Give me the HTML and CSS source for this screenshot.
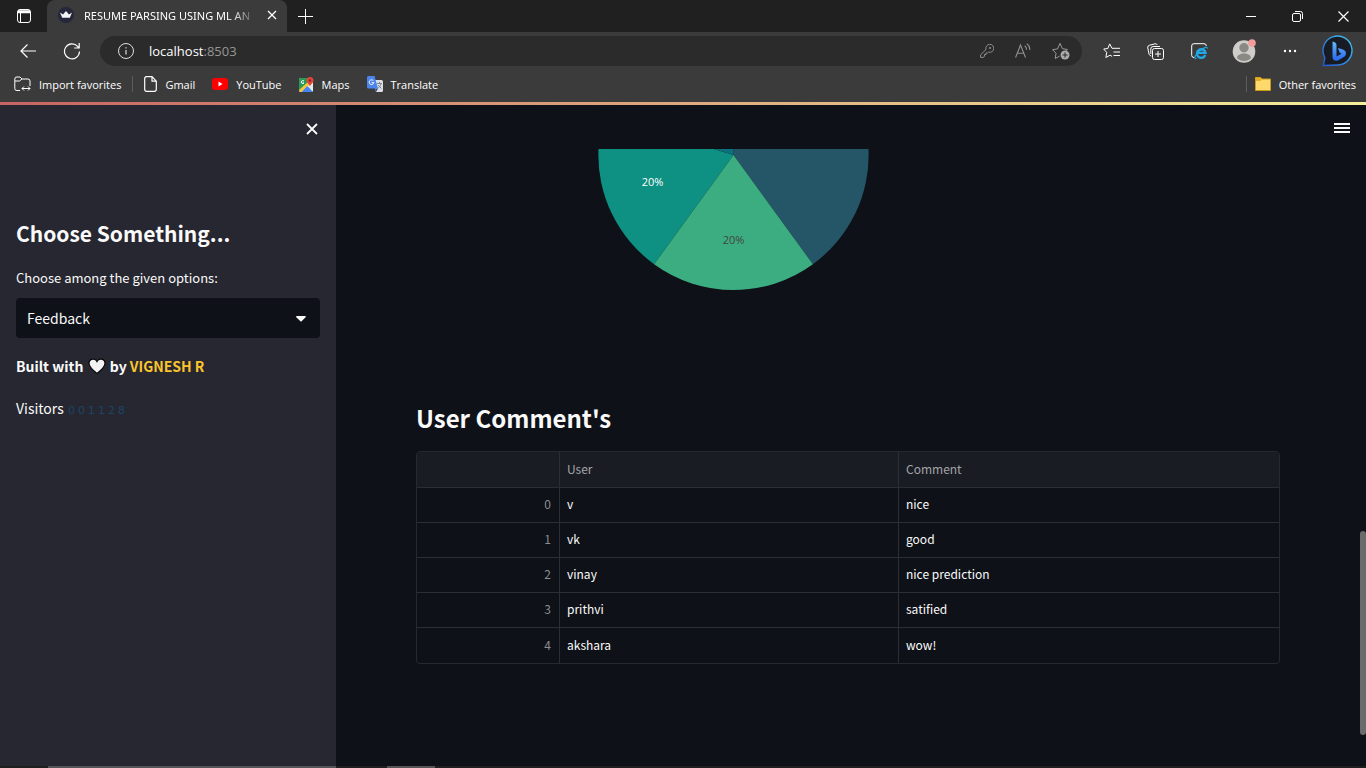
FILE: index.html
```html
<!DOCTYPE html>
<html lang="en">
<head>
<meta charset="utf-8">
<title>Resume parsing using ML and NLP</title>
<link rel="stylesheet" href="styles.css">
</head>
<body>
<div class="window">
  <header class="browser">
    <div class="tabstrip">
      <button class="icon-btn tab-actions" aria-label="Tab actions">
        <svg width="16" height="16" viewBox="0 0 16 16" fill="none" stroke="#fff"><rect x="1.5" y="1.5" width="13" height="13" rx="2.5"/><path d="M2 4.5h12M2 3h12" stroke-width="1.6"/><path d="M4.500 5v9"/></svg>
      </button>
      <div class="tab">
        <svg class="favicon" width="16" height="16" viewBox="0 0 16 16"><circle cx="8" cy="8" r="8" fill="#26273a"/><path d="M2 5.600l3 1.800L8 4l3 3.400 3-1.800-2.200 5.200H4.200z" fill="#f4f4f8"/></svg>
        <span class="tab-title">RESUME PARSING USING ML AN</span>
        <button class="icon-btn" aria-label="Close tab">
          <svg width="10" height="10" viewBox="0 0 10 10" stroke="#fff" stroke-width="1.300"><path d="M1 1l8 8M9 1L1 9"/></svg>
        </button>
      </div>
      <button class="icon-btn new-tab" aria-label="New tab">
        <svg width="15" height="15" viewBox="0 0 15 15" stroke="#fff"><path d="M7.500 0v15M0 7.500h15"/></svg>
      </button>
      <div class="window-controls">
        <button class="icon-btn" aria-label="Minimize"><svg width="10" height="10" viewBox="0 0 10 10" stroke="#fff"><path d="M0 5.500h10"/></svg></button>
        <button class="icon-btn" aria-label="Restore"><svg width="11" height="11" viewBox="0 0 11 11" fill="none" stroke="#fff"><rect x=".5" y="2.500" width="8" height="8" rx="1.500"/><path d="M3 .5h5.500a2 2 0 0 1 2 2V8"/></svg></button>
        <button class="icon-btn" aria-label="Close"><svg width="11" height="11" viewBox="0 0 11 11" stroke="#fff" stroke-width="1.200"><path d="M.5.5l10 10M10.500.5l-10 10"/></svg></button>
      </div>
    </div>

    <div class="toolbar">
      <button class="icon-btn back" aria-label="Back"><svg width="16" height="14" viewBox="0 0 16 14" fill="none" stroke="#fff" stroke-width="1.200"><path d="M16 7H1M7.500.5L1 7l6.500 6.500"/></svg></button>
      <button class="icon-btn reload" aria-label="Refresh"><svg width="18" height="18" viewBox="0 0 18 18" fill="none" stroke="#fff" stroke-width="1.200"><path d="M16.500 9.500A7.500 7.500 0 1 1 14.600 4.300L16 6M16.200 1v5h-5"/></svg></button>
      <div class="address">
        <svg width="16" height="16" viewBox="0 0 16 16" fill="none" stroke="#ddd"><circle cx="8" cy="8" r="7.500"/><path d="M8 7v4.500M8 4.200v1.400" stroke-width="1.200"/></svg>
        <span class="url">localhost<span class="port">:8503</span></span>
        <svg width="14" height="14" viewBox="0 0 14 14" fill="none" stroke="#909090"><path d="M6 5.500a4 4 0 1 1 2.500 2.600L7.500 9H6v1.500H4.500V12L3.500 13.400H.6v-2.500z"/><circle cx="10" cy="4" r=".7"/></svg>
        <svg width="16" height="16" viewBox="0 0 16 16" fill="none" stroke="#909090" stroke-width="1.100"><path d="M.6 14.500L5.500 2l5 12.500M2.300 10.200h6.500M9.700 2.700q2 1.400 1.800 4M11.700.6Q15.200 3 14.700 7"/></svg>
        <svg width="18" height="18" viewBox="0 0 18 18" fill="none" stroke="#999"><path d="M7.600 14.200l-4.400 2.300.8-5.200-3.400-3.600 4.900-.8L8 1.400l2.400 5.300 5 .8-1.300 1.300"/><circle cx="13" cy="13" r="4.500" fill="#aaa" stroke="none"/><path d="M13 10.500v5M10.500 13h5" stroke="#2b2b2b"/></svg>
      </div>
      <div class="tools">
        <button class="icon-btn" aria-label="Favorites"><svg width="17" height="16" viewBox="0 0 17 16" fill="none" stroke="#fff"><path d="M9 5.300h8M10.500 9H17M10.500 12.500H17M9 5.300L6.700.9 4.800 5.500.7 6l3 3.400-.8 5.100 4.200-2.300 2 1.200"/></svg></button>
        <button class="icon-btn" aria-label="Collections"><svg width="17" height="17" viewBox="0 0 17 17" fill="none" stroke="#fff"><path d="M4.300 13L3 12.500A3 3 0 0 1 2 11L.8 5A2.200 2.200 0 0 1 2.300 2.300L8 .8a2 2 0 0 1 2.300 1.200"/><rect x="5.500" y="5.500" width="11" height="11" rx="2"/><path d="M11 8v6M8 11h6M3.800 11V6a2.400 2.400 0 0 1 2.400-2.500H13"/></svg></button>
        <button class="icon-btn" aria-label="Internet Explorer mode"><svg width="17" height="17" viewBox="0 0 17 17" fill="none"><path d="M3.500 14.500H3A2.200 2.200 0 0 1 .7 12.500V3A2.200 2.200 0 0 1 3 .7h10A2.200 2.200 0 0 1 15.300 3" stroke="#fff"/><path d="M14.300 12A4.300 4.300 0 1 1 14.500 9.800H7" stroke="#20a9e5" stroke-width="2.300"/><path d="M5.500 15.500c-3 .8-2-3.500 3-7.500s8.500-5 7.500-2.200" stroke="#20a9e5" stroke-width="1.100"/></svg></button>
        <button class="icon-btn wide" aria-label="Profile"><svg width="24" height="24" viewBox="0 0 24 24"><circle cx="12" cy="12.500" r="11.300" fill="#cfcdca"/><circle cx="12" cy="8.800" r="4.700" fill="#8b8986"/><path d="M5 19c0-6 14-6 14 0-3 4-11 4-14 0z" fill="#8b8986"/><circle cx="20" cy="4" r="3.800" fill="#f29c9c"/></svg></button>
        <button class="icon-btn wide" aria-label="Settings and more"><svg width="14" height="4" viewBox="0 0 14 4" fill="#fff"><circle cx="2" cy="2" r="1.200"/><circle cx="7" cy="2" r="1.200"/><circle cx="12" cy="2" r="1.200"/></svg></button>
        <button class="icon-btn bing" aria-label="Bing"><svg width="32" height="32" viewBox="0 0 32 32"><defs><linearGradient id="bing" x1="0" y1="1" x2="1" y2="0"><stop offset="0" stop-color="#2459d8"/><stop offset="1" stop-color="#43c5ef"/></linearGradient><linearGradient id="bing-b" x1="0" y1="0" x2="0" y2="1"><stop offset="0" stop-color="#63b9fb"/><stop offset="1" stop-color="#2864ee"/></linearGradient></defs><path d="M1.500 30.500l1.300-8A14.500 14.500 0 1 1 16 30z" fill="#171b23" stroke="url(#bing)" stroke-width="1.400"/><path d="M10.500 6.500q4 .5 4 3.500v11.500l5-2.700-2-1.300-1.500-4.500q8 1.500 8 5 0 3-3 4.500l-4.500 2.700q-3 1.500-5-.5-1-1-1-3z" fill="url(#bing-b)"/></svg></button>
      </div>
    </div>

    <nav class="bookmarks" aria-label="Favorites bar">
      <a href="#"><svg width="17" height="16" viewBox="0 0 17 16" fill="none" stroke="#fff"><path d="M6 14.500H3A2 2 0 0 1 .8 12.500V3A2 2 0 0 1 3 1h3l2 2h6a2 2 0 0 1 2 2v5M1 5h4.500L8 3M8 12.500h8M10 10.500l-2 2 2 2M14 10.500l2 2-2 2"/></svg>Import favorites</a>
      <span class="divider"></span>
      <a href="#"><svg width="13" height="16" viewBox="0 0 13 16" fill="none" stroke="#fff" stroke-width="1.200"><path d="M2.500.7H8l4.300 4.500v8.300a1.800 1.800 0 0 1-1.800 1.800h-8A1.800 1.800 0 0 1 .7 13.500v-11A1.800 1.800 0 0 1 2.500.7zM8 .7v4.500h4.300"/></svg>Gmail</a>
      <a href="#"><svg width="16" height="12" viewBox="0 0 16 12"><rect width="16" height="12" rx="3" fill="#f00"/><path d="M6.500 3.500v5L10.500 6z" fill="#fff"/></svg>YouTube</a>
      <a href="#"><svg width="15" height="15" viewBox="0 0 15 15"><rect y="1" width="14" height="14" rx="1.500" fill="#e9e9e9"/><path d="M0 2.500Q0 1 1.500 1H9l1 4-10 9z" fill="#279b56"/><path d="M1 15l6.500-7 6.500 7z" fill="#4285f4"/><path d="M0 13L10 4l2 2-9 9H1.500z" fill="#f8c43b"/><path d="M3 15l4.800-5.500L13 15z" fill="#4285f4"/><path d="M11 10c0-3-3.500-3.500-3.500-6.500a3.500 3.500 0 0 1 7 0C14.500 6.500 11 7 11 10z" fill="#e5433b"/><circle cx="11" cy="3.500" r="1.200" fill="#8c2520"/><path d="M5 4.200A1.500 1.500 0 1 0 5 6H3.700" fill="none" stroke="#fff"/></svg>Maps</a>
      <a href="#"><svg width="16" height="16" viewBox="0 0 16 16"><path d="M7 4h7.500A1.500 1.500 0 0 1 16 5.500v9a1.500 1.500 0 0 1-1.500 1.500H9z" fill="#dcdfe3"/><path d="M1.500 0h6L11 12.500H1.500A1.500 1.500 0 0 1 0 11V1.500A1.500 1.500 0 0 1 1.500 0z" fill="#4c85ed"/><path d="M8.500 12.500H11L9.200 16z" fill="#2950a8"/><path d="M6.300 4.700A2.300 2.300 0 1 0 6.800 6.700H4.700" fill="none" stroke="#fff"/><path d="M10 7.500h5M12.500 6v1.500M14 7.500c-.5 3-2 4-3 4.500M11 9l3.500 3.500" fill="none" stroke="#7c8790"/></svg>Translate</a>
      <span class="divider divider-end"></span>
      <a href="#"><svg width="16" height="14" viewBox="0 0 16 14"><path d="M.5 13.500V.5h5L7 2h8.500v11.500z" fill="#ffd96b" stroke="#c99a1c"/><path d="M.5.5h5L7 2 5.500 4h-5z" fill="#e3ae26"/></svg>Other favorites</a>
    </nav>
  </header>

  <div class="decoration"></div>

  <div class="app">
    <aside class="sidebar">
      <button class="icon-btn sidebar-close" aria-label="Close sidebar"><svg width="12" height="12" viewBox="0 0 12 12" stroke="#fafafa" stroke-width="1.800"><path d="M1 1l10 10M11 1L1 11"/></svg></button>
      <h2 class="sidebar-title">Choose Something...</h2>
      <label class="option-label" for="option">Choose among the given options:</label>
      <div class="select-wrap">
        <select id="option" class="select"><option>Feedback</option><option>User</option><option>Admin</option></select>
        <svg class="caret" width="10" height="6" viewBox="0 0 10 6" fill="#fafafa"><path d="M0 1Q0 0 1 0h8q1 0 .8 1L5.600 5.200q-.6.500-1.200 0z"/></svg>
      </div>
      <p class="built">Built with <svg class="heart" width="18" height="17" viewBox="0 0 18 17"><path d="M9 15.500C4 11.500 1 8.500 1 5.200a4.200 4.200 0 0 1 8-1.700 4.200 4.200 0 0 1 8 1.700c0 3.300-3 6.300-8 10.300z" fill="#f3f3f3" stroke="#050505" stroke-width="1.200"/></svg> by <a href="#">VIGNESH R</a></p>
      <p class="visitors">Visitors <span class="counter"><span>0</span><span>0</span><span>1</span><span>1</span><span>2</span><span>8</span></span></p>
    </aside>

    <main class="main">
      <button class="icon-btn menu" aria-label="Main menu"><svg width="16" height="11" viewBox="0 0 16 11" fill="#fafafa"><path d="M0 0h16v2H0zM0 4h16v2H0zM0 8h16v2H0z"/></svg></button>
      <svg class="chart" width="271" height="142" viewBox="0 0 271 142" role="img" aria-label="Pie chart">
        <path d="M135.500 6L214.900 115.200A135 135 0 0 0 270.500 0H135.500z" fill="#255668"/>
        <path d="M135.500 6L56.100 115.200A135 135 0 0 1 .5 0H116z" fill="#0e9082"/>
        <path d="M135.500 6L56.100 115.200A135 135 0 0 0 214.900 115.200z" fill="#3cad80"/>
        <path d="M135.500 6L116 0h19.500z" fill="#0c717c"/>
        <text class="slice-text" x="54.500" y="37" fill="#fff">20%</text>
        <text class="slice-text" x="135.500" y="95" fill="#444">20%</text>
      </svg>
      <h2 class="comments-title">User Comment's</h2>
      <div class="table-frame">
        <table class="comments">
          <colgroup><col class="col-index"><col class="col-user"><col></colgroup>
          <thead><tr><th></th><th scope="col">User</th><th scope="col">Comment</th></tr></thead>
          <tbody>
            <tr><td class="index">0</td><td>v</td><td>nice</td></tr>
            <tr><td class="index">1</td><td>vk</td><td>good</td></tr>
            <tr><td class="index">2</td><td>vinay</td><td>nice prediction</td></tr>
            <tr><td class="index">3</td><td>prithvi</td><td>satified</td></tr>
            <tr><td class="index">4</td><td>akshara</td><td>wow!</td></tr>
          </tbody>
        </table>
      </div>
      <div class="scroll-thumb"></div>
    </main>
  </div>
  <div class="taskbar"><span class="task-search"></span><span class="task-app"></span></div>
</div>
</body>
</html>
```
FILE: styles.css
```css
* { box-sizing: border-box; }

body {
  margin: 0;
  background: #0e1117;
  color: #fafafa;
  font-family: "Noto Sans CJK JP", "Noto Sans", sans-serif;
}

.window {
  display: flex;
  flex-direction: column;
  min-height: 100vh;
}

.icon-btn {
  display: flex;
  align-items: center;
  justify-content: center;
  flex: none;
  padding: 0;
  border: 0;
  background: none;
  cursor: pointer;
}

/* Browser frame */
.browser {
  background: #3b3b3b;
  color: #fff;
  font-family: "Open Sans", "Noto Sans", sans-serif;
  font-size: 11px;
}

.tabstrip {
  display: flex;
  align-items: stretch;
  height: 32px;
  background: #202020;
}

.tab-actions { width: 47px; }

.tab {
  display: flex;
  align-items: center;
  gap: 10px;
  width: 240px;
  padding: 0 10px 2px 11px;
  border-radius: 8px 8px 0 0;
  background: #3b3b3b;
}

.favicon { flex: none; }

.tab-title {
  flex: 1;
  min-width: 0;
  white-space: nowrap;
  font-family: "Noto Sans", sans-serif;
  mask-image: linear-gradient(to right, #000 85%, transparent);
}

.new-tab { width: 36px; }

.window-controls {
  display: flex;
  margin-left: auto;
}

.window-controls .icon-btn { width: 46px; }

.toolbar {
  display: flex;
  align-items: center;
  height: 38px;
}

.back { width: 56px; }
.reload { width: 32px; }

.address {
  display: flex;
  align-items: center;
  gap: 21px;
  flex: 1;
  height: 30px;
  margin-left: 12px;
  padding: 0 12px 0 18px;
  border-radius: 15px;
  background: #2b2b2b;
}

.url {
  flex: 1;
  margin-left: -6px;
  font-size: 13px;
}

.port { color: #969696; }

.tools {
  display: flex;
  align-items: center;
  padding: 0 3px 0 7px;
}

.tools .icon-btn { width: 44px; }
.tools .wide { width: 46px; }
.tools .bing { width: 50px; }

.bookmarks {
  display: flex;
  align-items: center;
  gap: 17px;
  height: 32px;
  padding: 0 10px 4px 14px;
}

.bookmarks a {
  display: flex;
  align-items: center;
  gap: 8px;
  color: inherit;
  text-decoration: none;
  white-space: nowrap;
}

.divider {
  width: 1px;
  height: 16px;
  margin: 0 -6px;
  background: #5c5c5c;
}

.divider-end { margin: 0 -9px 0 auto; }

.decoration {
  height: 3px;
  background: linear-gradient(to right, #c86464, #f5f09a);
}

/* App */
.app {
  display: flex;
  flex: 1;
}

.sidebar {
  display: flex;
  flex-direction: column;
  width: 336px;
  padding: 16px;
  background: #262730;
}

.sidebar-close {
  align-self: flex-end;
  width: 16px;
  height: 16px;
}

.sidebar-title {
  margin: 82px 0 0;
  font-size: 21px;
  line-height: 28px;
}

.option-label {
  margin: 20px 0 9px;
  font-size: 13px;
  line-height: 22px;
}

.select-wrap { position: relative; }

.select {
  width: 100%;
  height: 40px;
  padding: 0 11px;
  border: 0;
  border-radius: 4px;
  background: #0e1117;
  color: #fafafa;
  font-family: inherit;
  font-size: 14px;
  appearance: none;
}

.caret {
  position: absolute;
  top: 18px;
  right: 14px;
  pointer-events: none;
}

.built {
  margin: 15px 0 0;
  font-size: 14px;
  font-weight: 700;
  line-height: 26px;
}

.built a {
  color: #fbc42d;
  text-decoration: none;
}

.heart {
  margin: 0 1px;
  vertical-align: -3px;
}

.visitors {
  margin: 16px 0 0;
  font-size: 14px;
  line-height: 26px;
}

.counter {
  display: inline-flex;
  gap: 3px;
  margin-left: 1px;
  color: #1c4565;
  font-family: "DejaVu Sans", sans-serif;
  font-size: 11px;
}

.main {
  position: relative;
  display: flex;
  flex-direction: column;
  flex: 1;
  padding: 44px 86px 80px 80px;
}

.menu {
  position: absolute;
  top: 15px;
  right: 16px;
  height: 16px;
}

.chart {
  flex: none;
  margin-left: 182px;
}

.slice-text {
  font-family: "Open Sans", sans-serif;
  font-size: 11px;
  text-anchor: middle;
}

.comments-title {
  margin: 109px 0 15px;
  font-size: 24px;
  line-height: 36px;
}

.table-frame {
  overflow: hidden;
  border: 1px solid #262930;
  border-radius: 4px;
}

.comments {
  width: 100%;
  border-collapse: separate;
  border-spacing: 0;
  table-layout: fixed;
  font-size: 12px;
}

.col-index { width: 143px; }
.col-user { width: 339px; }

.comments th,
.comments td {
  height: 35px;
  padding: 0 8px 2px 7px;
  border-right: 1px solid #2b2e35;
  border-bottom: 1px solid #2b2e35;
  line-height: 18px;
  text-align: left;
}

.comments th {
  height: 36px;
  background: #1a1c23;
  color: #a3a4a8;
  font-weight: 400;
}

.comments th:last-child,
.comments td:last-child { border-right: 0; }

.comments tr:last-child td { border-bottom: 0; }

.comments .index {
  color: #8c8d91;
  text-align: right;
}

.scroll-thumb {
  position: absolute;
  top: 426px;
  right: 0;
  width: 6px;
  height: 204px;
  border-radius: 3px;
  background: #6b6b6b;
}

.taskbar {
  display: flex;
  height: 2px;
  background: #1f1f20;
}

.task-search {
  width: 288px;
  margin-left: 48px;
  background: #555558;
}

.task-app {
  width: 48px;
  margin-left: 51px;
  background: #555558;
}
```
